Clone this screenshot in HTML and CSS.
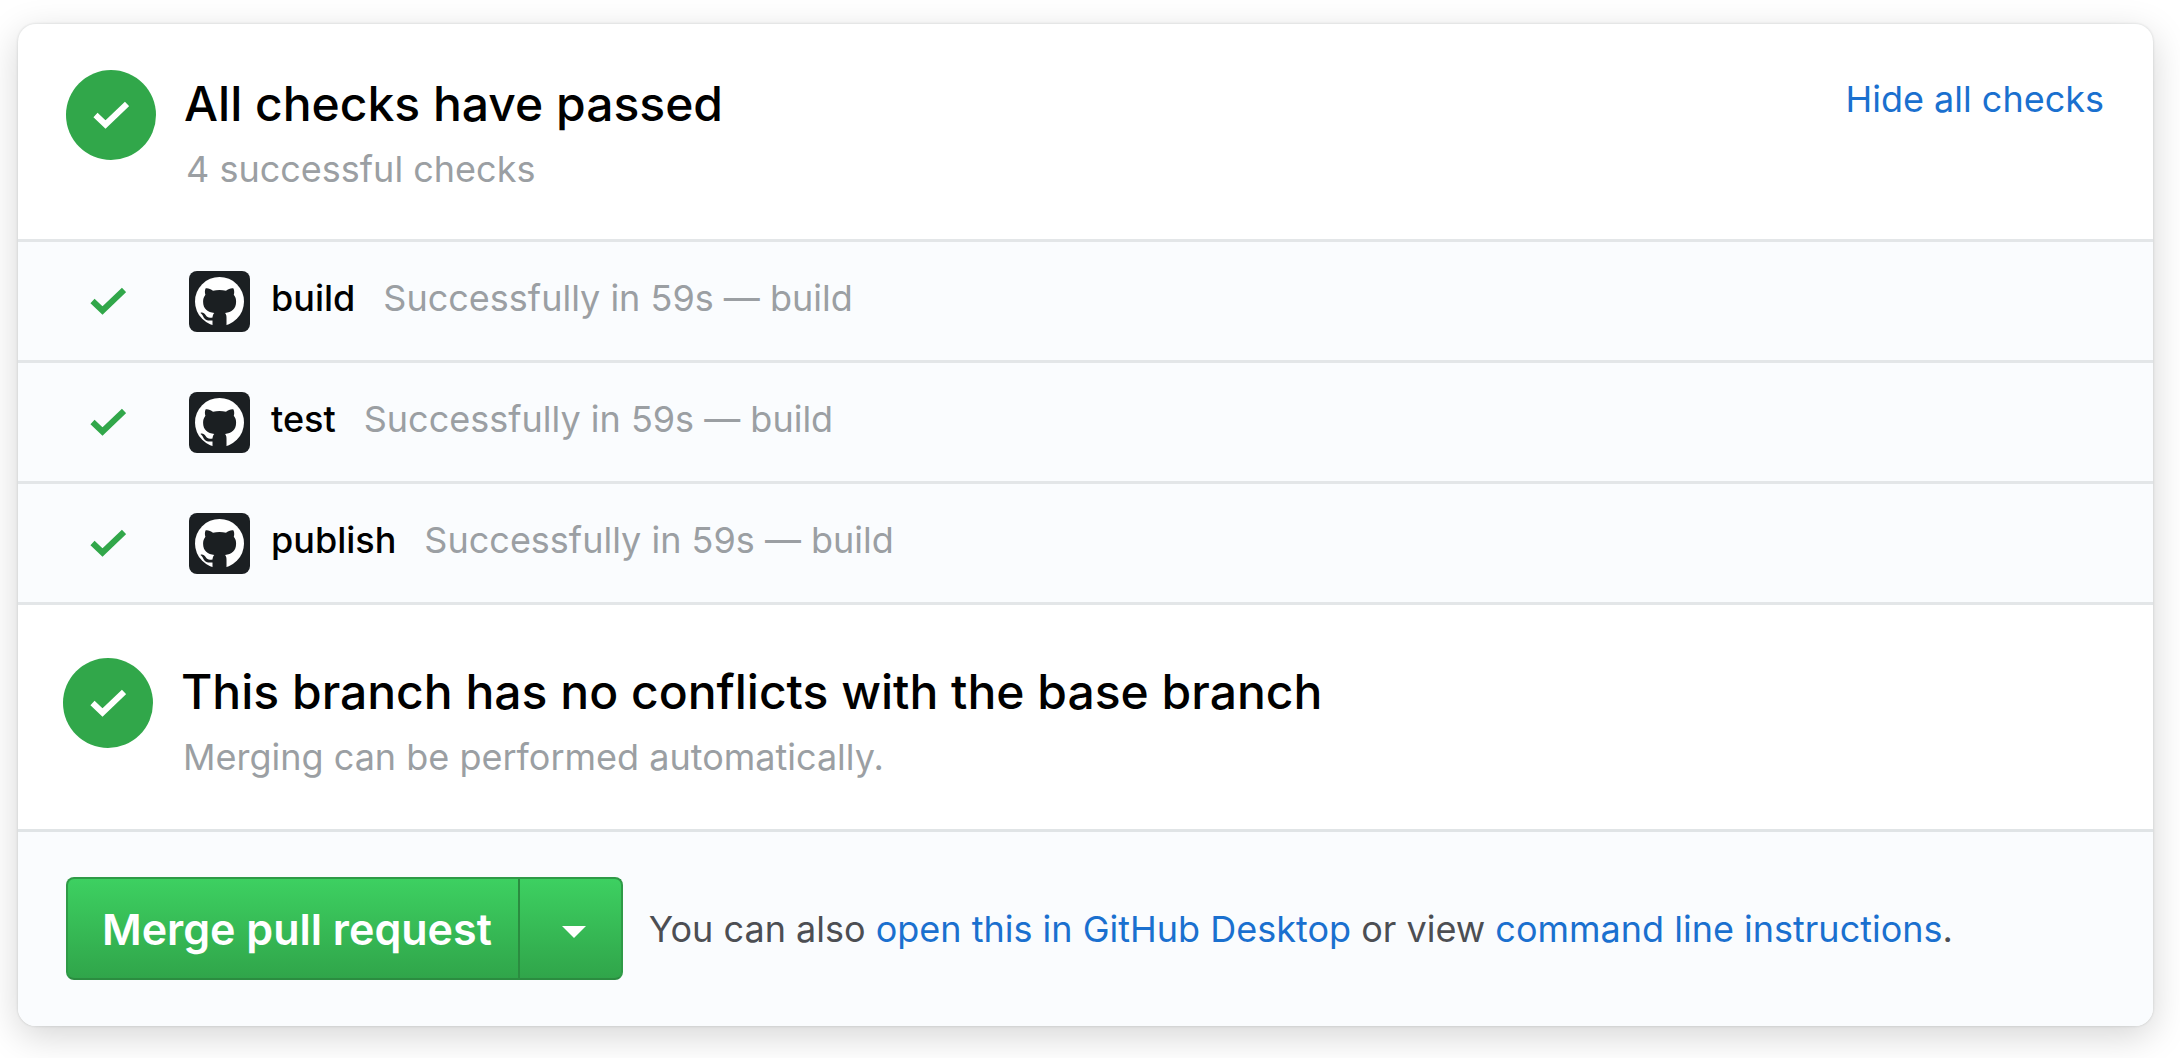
FILE: index.html
```html
<!DOCTYPE html>
<html lang="en">
<head>
<meta charset="utf-8">
<meta name="viewport" content="width=device-width, initial-scale=1">
<title>Merge pull request</title>
<link rel="stylesheet" href="styles.css">
</head>
<body>
<svg class="sprite" aria-hidden="true">
  <symbol id="check" viewBox="0 0 36 28">
    <path d="M2.500 14 L12.500 23.500 L34 3" fill="none" stroke="currentColor" stroke-width="6"/>
  </symbol>
  <symbol id="mark" viewBox="0 0 49 49">
    <circle cx="24.500" cy="24.500" r="24.500" fill="currentColor"/>
    <path class="ink" d="M10.500 11.500c1.800-.8 5.200.6 7.500 2.200 4-1.100 9-1.100 13 0 2.300-1.600 5.700-3 7.500-2.200 1 2.200.8 4.700.3 6.200 1.800 2.300 2.300 4.300 2.300 7 0 7.500-4.500 10.300-11 11.300 1 1.200 1.400 2.500 1.400 4.500V50h-14v-6.600c-6.500 1-8.200-1.500-9.500-4.400-.7-1.500-1.600-2.200-2.600-3 1.900-1.200 4 .2 5.200 2 1.600 2.600 3.600 3.200 6.900 2.400.2-2 .8-3.400 1.800-4.400-6.500-1-11.200-3.800-11.200-11.300 0-2.700.6-4.700 2.300-7-.6-1.500-.8-4 .1-6.200z"/>
  </symbol>
</svg>
<main class="card">
  <section class="status">
    <span class="badge"><svg><use href="#check"/></svg></span>
    <div class="status-text">
      <h2>All checks have passed</h2>
      <p>4 successful checks</p>
    </div>
    <a class="toggle" href="#checks">Hide all checks</a>
  </section>
  <ul class="checks" id="checks">
    <li><svg class="tick"><use href="#check"/></svg><span class="avatar"><svg><use href="#mark"/></svg></span><strong>build</strong><span class="detail">Successfully in 59s — build</span></li>
    <li><svg class="tick"><use href="#check"/></svg><span class="avatar"><svg><use href="#mark"/></svg></span><strong>test</strong><span class="detail">Successfully in 59s — build</span></li>
    <li><svg class="tick"><use href="#check"/></svg><span class="avatar"><svg><use href="#mark"/></svg></span><strong>publish</strong><span class="detail">Successfully in 59s — build</span></li>
  </ul>
  <section class="status status-branch">
    <span class="badge"><svg><use href="#check"/></svg></span>
    <div class="status-text">
      <h2>This branch has no conflicts with the base branch</h2>
      <p>Merging can be performed automatically.</p>
    </div>
  </section>
  <footer class="merge">
    <div class="split">
      <button class="primary" type="button">Merge pull request</button>
      <button class="more" type="button" aria-label="Select merge method"><span class="caret"></span></button>
    </div>
    <p>You can also <a href="#desktop">open this in GitHub Desktop</a> or view <a href="#cli">command line instructions</a>.</p>
  </footer>
</main>
</body>
</html>
```
FILE: styles.css
```css
* {
  box-sizing: border-box;
}

body {
  margin: 0;
  padding: 24px 27px 32px 18px;
  background: #fff;
  color: #000;
  font: 400 36px/48px Inter, "Liberation Sans", sans-serif;
}

h2, p, ul {
  margin: 0;
  padding: 0;
}

a {
  color: #1a70cf;
  text-decoration: none;
}

.sprite {
  position: absolute;
  width: 0;
  height: 0;
}

.card {
  border-radius: 18px;
  background: #fff;
  box-shadow: 0 0 2px 1px rgba(0, 20, 20, .08), 0 10px 36px rgba(0, 0, 0, .17);
  overflow: hidden;
}

.status {
  display: flex;
  align-items: flex-start;
  padding: 46px 49px 46px 48px;
}

.status-branch {
  padding: 53px 51px 48px 45px;
}

.badge {
  display: flex;
  flex: none;
  align-items: center;
  justify-content: center;
  width: 90px;
  height: 90px;
  border-radius: 50%;
  background: #31a74a;
  color: #fff;
}

.badge svg, .tick {
  width: 36px;
  height: 28px;
}

.status-text {
  flex: 1;
  margin-left: 28px;
  padding-top: 4px;
}

h2 {
  font-size: 48px;
  font-weight: 500;
  line-height: 60px;
}

.status-text p {
  padding: 11px 0 0 2px;
  color: #9b9fa3;
}

.toggle {
  padding-top: 5px;
}

.checks {
  list-style: none;
  background: #fafcfe;
  border-bottom: 3px solid #e3e6e8;
}

.checks li {
  display: flex;
  align-items: center;
  height: 121px;
  border-top: 3px solid #e3e6e8;
  padding: 0 48px 0 72px;
}

.tick {
  color: #31a74a;
  margin-right: 63px;
}

.avatar {
  display: flex;
  align-items: center;
  justify-content: center;
  width: 61px;
  height: 61px;
  margin-right: 21px;
  border-radius: 8px;
  background: #1b1f22;
  color: #fff;
}

.avatar svg {
  width: 49px;
  height: 49px;
}

.ink {
  fill: #1b1f22;
}

.checks strong {
  font-weight: 500;
  margin-right: 28px;
  padding-bottom: 6px;
}

.detail {
  color: #9b9fa3;
  padding-bottom: 6px;
}

.merge {
  display: flex;
  align-items: center;
  gap: 26px;
  padding: 45px 48px 46px;
  border-top: 3px solid #e0e4e6;
  background: #fafcfe;
  color: #4c4e53;
}

.split {
  display: flex;
  height: 103px;
  border: 2px solid #2f9a47;
  border-bottom-color: #2b8c40;
  border-radius: 8px;
  background: linear-gradient(#3dd061, #30a54a);
}

.split button {
  border: 0;
  background: none;
  color: #fff;
  font: 600 43px/60px Inter, "Liberation Sans", sans-serif;
}

.primary {
  padding: 0 26px 0 34px;
}

.split .more {
  display: flex;
  align-items: center;
  justify-content: center;
  width: 103px;
  padding: 6px 0 0 8px;
  border-left: 2px solid #2b8c40;
}

.caret {
  border: 12px solid transparent;
  border-top-color: #fff;
  border-bottom: 0;
}
```
